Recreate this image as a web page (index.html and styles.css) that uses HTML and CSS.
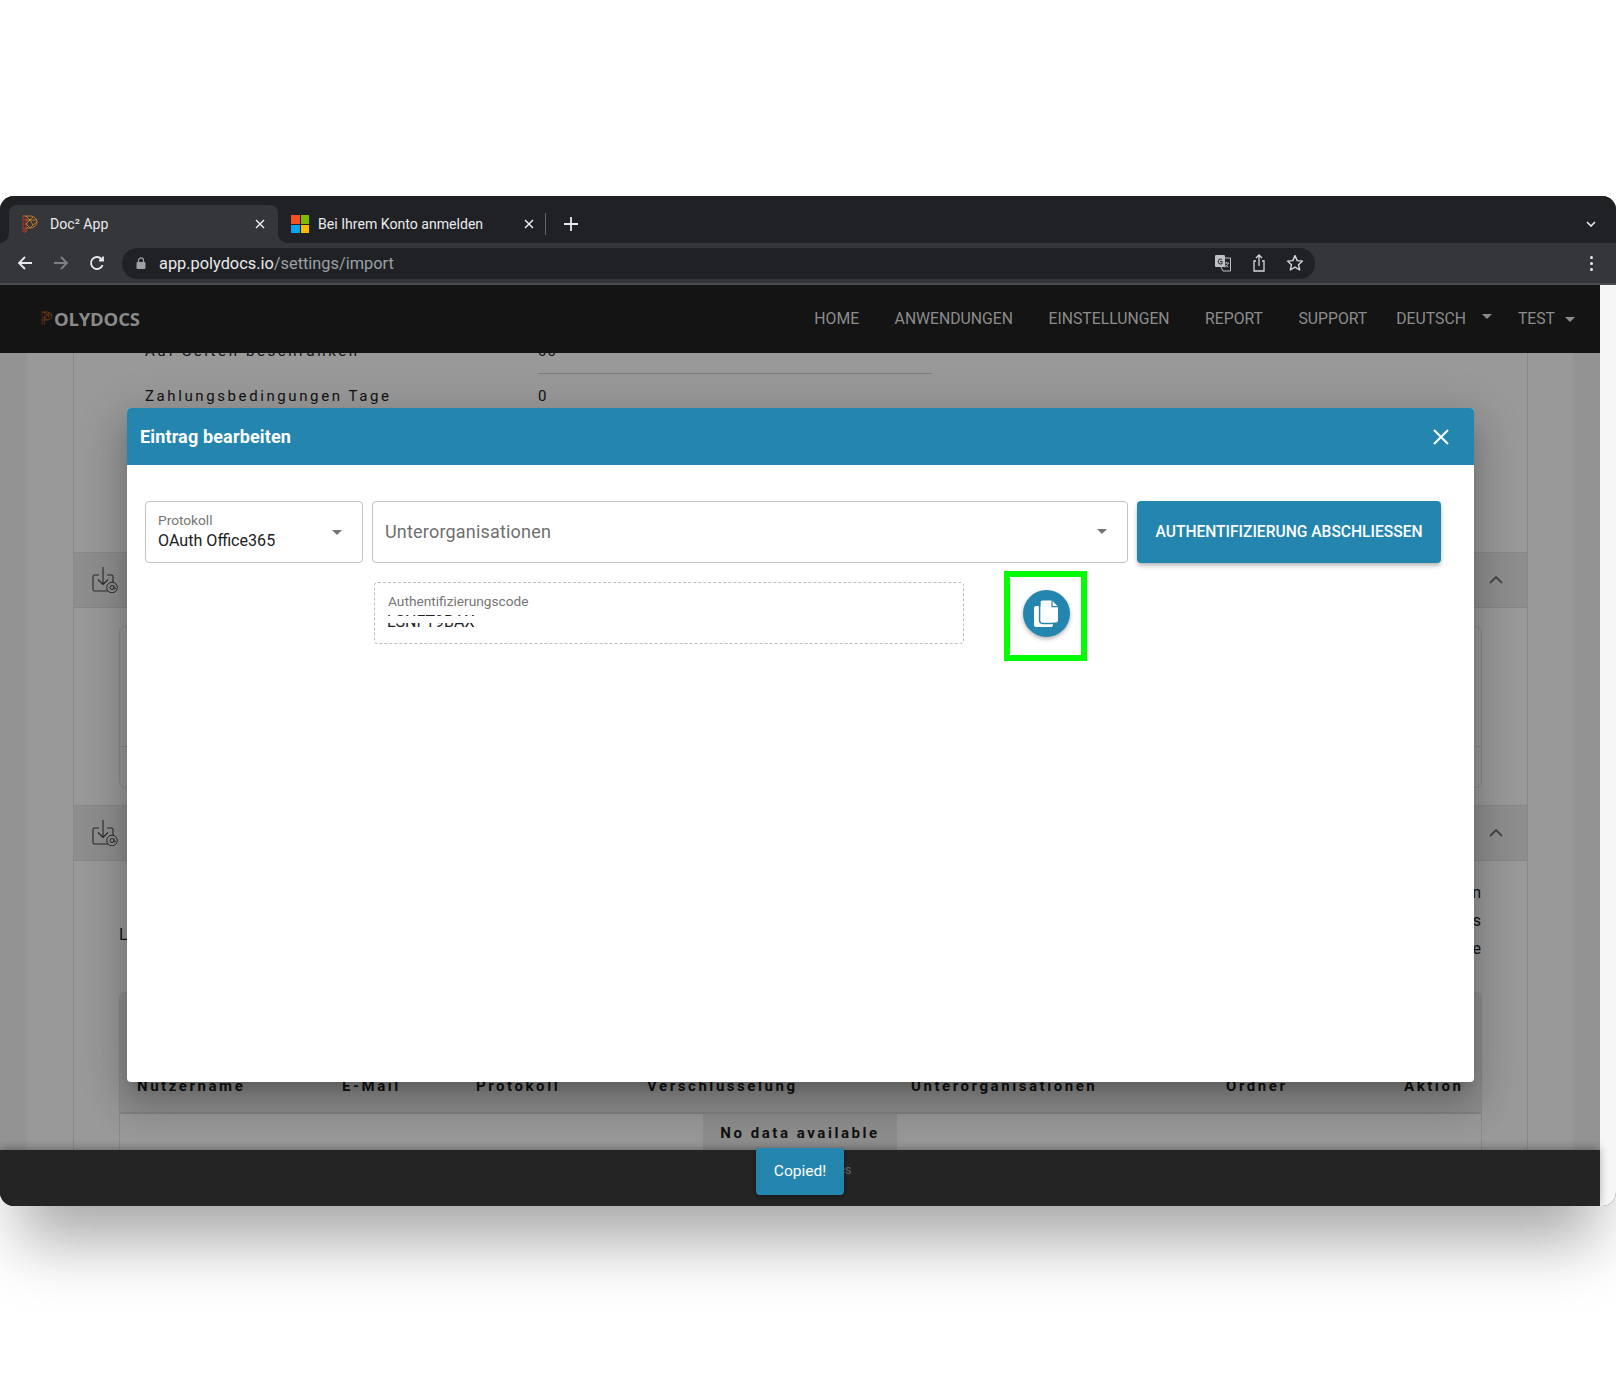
FILE: index.html
```html
<!DOCTYPE html>
<html lang="de">
<head>
<meta charset="utf-8">
<title>Doc² App</title>
<link rel="stylesheet" href="styles.css">
</head>
<body>
<div class="window">
  <div class="tabstrip">
    <div class="tab tab-active">
      <svg class="favicon" viewBox="0 0 16 18"><g fill="none" stroke-width=".8"><path stroke="#b8392a" d="M1 1v16h3v-4M1 13h3M1 9h5M1 5h3M4 1v16M1 13l3 4"/><path stroke="#e08a22" d="M1 1h7c4 0 7 3 7 6s-3 6-7 6H4M4 1l4 4 3-3M8 5l-4 4 4 4M8 5l3 5 4-3M8 5h7M8 13l3-3M4 5l4 0"/></g></svg>
      <span class="tab-title">Doc² App</span>
      <svg class="tab-close" viewBox="0 0 10 10"><path d="M1 1l8 8M9 1l-8 8"/></svg>
    </div>
    <div class="tab">
      <div class="ms-logo"><i class="ms-r"></i><i class="ms-g"></i><i class="ms-b"></i><i class="ms-y"></i></div>
      <span class="tab-title">Bei Ihrem Konto anmelden</span>
      <svg class="tab-close" viewBox="0 0 10 10"><path d="M1 1l8 8M9 1l-8 8"/></svg>
    </div>
    <div class="tab-sep"></div>
    <svg class="new-tab" viewBox="0 0 14 14"><path d="M7 0v14M0 7h14"/></svg>
    <svg class="tab-menu" viewBox="0 0 10 6"><path d="M1 1l4 4 4-4"/></svg>
  </div>

  <div class="toolbar">
    <svg class="tool-icon" viewBox="0 0 16 16"><path d="M15 8H2M8 2L2 8l6 6"/></svg>
    <svg class="tool-icon tool-dim" viewBox="0 0 16 16"><path d="M1 8h13M8 2l6 6-6 6"/></svg>
    <svg class="tool-icon" viewBox="0 0 16 16"><path d="M13.6 10.2A6 6 0 1 1 12.4 3.9L14 5.5M14 1.500v4h-4"/></svg>
    <div class="omnibox">
      <svg class="lock" viewBox="0 0 10 12"><path d="M2.500 5V3.400a2.500 2.500 0 0 1 5 0V5" fill="none" stroke="#9aa0a6" stroke-width="1.200"/><rect x=".5" y="5" width="9" height="7" rx="1" fill="#9aa0a6"/></svg>
      <span class="url"><b>app.polydocs.io</b>/settings/import</span>
      <svg class="omni-icon omni-translate" viewBox="0 0 18 18"><rect x="1" y="1" width="10" height="12" rx="1" fill="#bdc1c6"/><path d="M7 4h9.500v13H9L7 13" fill="none" stroke="#bdc1c6"/><path d="M8 5.500A2.400 2.400 0 1 0 8 9.500V7.500H6" fill="none" stroke="#35363a" stroke-width="1.100"/><path d="M10 9h5M12.500 8v1M14.300 9c-.5 2-2 3.400-3.800 4.200M11 10.500c.8 1.200 2 2 3.300 2.600" fill="none" stroke="#bdc1c6" stroke-width=".9"/></svg>
      <svg class="omni-icon" viewBox="0 0 18 18"><path d="M6 7H4v10h10V7h-2M9 12V1M6 4l3-3 3 3" fill="none" stroke="#d5d7da" stroke-width="1.300"/></svg>
      <svg class="omni-icon" viewBox="0 0 18 18"><path d="M9 1.600l2.200 5 5.300.5-4 3.600 1.200 5.300L9 13.200 4.300 16l1.200-5.300-4-3.600 5.300-.5z" fill="none" stroke="#d5d7da" stroke-width="1.400" stroke-linejoin="round"/></svg>
    </div>
    <div class="kebab"><i></i><i></i><i></i></div>
  </div>

  <div class="viewport">
    <div class="app">
      <nav class="navbar">
        <div class="logo">
          <svg class="logo-mark" viewBox="0 0 12 14"><g fill="none" stroke-width=".9"><path stroke="#5a1f14" d="M1 0v14M3.500 0v14M1 10l2.500 4M1 7h4"/><path stroke="#6e3f13" d="M1 1h5c3 0 5 2 5 4s-2 4-5 4H1M3.500 1l3 3 2-3M6.500 4l-3 3 3 2M6.500 4H11M6.500 4l2 3"/></g></svg>
          <span>OLYDOCS</span>
        </div>
        <ul class="nav-links">
          <li>HOME</li>
          <li>ANWENDUNGEN</li>
          <li>EINSTELLUNGEN</li>
          <li>REPORT</li>
          <li>SUPPORT</li>
          <li class="nav-lang">DEUTSCH<i class="caret caret-lang"></i></li>
          <li class="nav-user">TEST<i class="caret"></i></li>
        </ul>
      </nav>

      <main class="page">
        <div class="gutter">
          <div class="panel">
            <section class="settings">
              <div class="setting setting-clip"><span>Auf Seiten beschränken</span><span class="setting-value setting-underlined">00</span></div>
              <div class="setting"><span>Zahlungsbedingungen Tage</span><span class="setting-value">0</span></div>
            </section>

            <header class="acc-head">
              <svg class="acc-icon" viewBox="0 0 26 26"><use href="#inbox-at"/></svg>
              <svg class="acc-chevron" viewBox="0 0 14 9"><path d="M1 8l6-6 6 6"/></svg>
            </header>
            <section class="acc-body acc-body-first">
              <div class="card"><div class="card-foot"></div></div>
            </section>

            <header class="acc-head">
              <svg class="acc-icon" viewBox="0 0 26 26"><use href="#inbox-at"/></svg>
              <svg class="acc-chevron" viewBox="0 0 14 9"><path d="M1 8l6-6 6 6"/></svg>
            </header>
            <section class="acc-body">
              <div class="intro">
                <p class="intro-left">L</p>
                <div class="intro-right"><p>n</p><p>s</p><p>e</p></div>
              </div>
              <div class="table">
                <div class="table-head">
                  <span class="col-user">Nutzername</span>
                  <span class="col-mail">E-Mail</span>
                  <span class="col-proto">Protokoll</span>
                  <span class="col-enc">Verschlüsselung</span>
                  <span class="col-org">Unterorganisationen</span>
                  <span class="col-folder">Ordner</span>
                  <span class="col-action">Aktion</span>
                </div>
                <div class="table-body"><span class="no-data">No data available</span></div>
              </div>
            </section>
          </div>
        </div>
      </main>

      <footer class="footer"><span class="footer-text">© 2022 Polydocs</span></footer>

      <div class="modal">
        <div class="modal-head">
          <h2>Eintrag bearbeiten</h2>
          <svg class="modal-close" viewBox="0 0 16 16"><path d="M1 1l14 14M15 1L1 15"/></svg>
        </div>
        <div class="modal-body">
          <div class="form-row">
            <div class="field field-proto">
              <div class="field-text">
                <span class="field-label">Protokoll</span>
                <span class="field-value">OAuth Office365</span>
              </div>
              <i class="select-arrow"></i>
            </div>
            <div class="field field-org">
              <span class="field-placeholder">Unterorganisationen</span>
              <i class="select-arrow"></i>
            </div>
            <button class="finish-btn">AUTHENTIFIZIERUNG ABSCHLIESSEN</button>
          </div>
          <div class="code-row">
            <div class="code-field">
              <span class="field-label code-label">Authentifizierungscode</span>
              <span class="code-value">LSNFT9BAX</span>
            </div>
            <button class="copy-btn">
              <svg viewBox="0 0 47 47">
                <path d="M13 16h8v16h9v3a2 2 0 0 1-2 2H13a2 2 0 0 1-2-2V18a2 2 0 0 1 2-2z" fill="#fff"/>
                <path d="M19.500 10.600H29l6 6v14a2 2 0 0 1-2 2H19.500a2 2 0 0 1-2-2v-18a2 2 0 0 1 2-2z" fill="#fff"/>
                <path d="M16.600 12.600v18a3 3 0 0 0 3 3H30" fill="none" stroke="#2486ae" stroke-width="1.500"/>
                <path d="M29 10.600v6h6" fill="none" stroke="#2486ae" stroke-width="1.200"/>
              </svg>
            </button>
          </div>
        </div>
      </div>

      <div class="toast">Copied!</div>
    </div>
    <div class="scroll-track"></div>
  </div>
</div>

<svg class="sprite" aria-hidden="true">
  <symbol id="inbox-at" viewBox="0 0 26 26">
    <path d="M7 8H2.500a1.500 1.500 0 0 0-1.500 1.500v13A1.500 1.500 0 0 0 2.500 24H16M15 8h4.500A1.500 1.500 0 0 1 21 9.500V15" fill="none" stroke="#2a2a2a" stroke-width="1.100"/>
    <path d="M11 0v17M6 12.500l5 5 5-5" fill="none" stroke="#2a2a2a" stroke-width="1.100"/>
    <circle cx="20" cy="20.500" r="5.300" fill="none" stroke="#2a2a2a" stroke-width="1"/>
    <circle cx="20" cy="20.500" r="2" fill="none" stroke="#2a2a2a" stroke-width="1"/>
    <path d="M22 18.500v3c0 1 1.500 1 1.500-.5" fill="none" stroke="#2a2a2a" stroke-width=".9"/>
  </symbol>
</svg>
</body>
</html>
```
FILE: styles.css
```css
* { box-sizing: border-box; }
html, body { margin: 0; padding: 0; background: #fff; }
body { height: 1400px; padding-top: 196px; font-family: Roboto, "Liberation Sans", sans-serif; overflow: hidden; }
p, h2, ul { margin: 0; padding: 0; }
.sprite { display: none; }

.window {
  width: 1616px; height: 1010px; display: flex; flex-direction: column;
  border-radius: 14px; overflow: hidden; background: #202124;
  box-shadow: 0 55px 60px -20px rgba(0,0,0,.34);
}

/* tabs */
.tabstrip { height: 47px; flex: none; display: flex; align-items: flex-end; padding-left: 9px; position: relative; background: #202124; }
.tab { width: 269px; height: 38px; display: flex; align-items: center; padding: 0 0 0 13px; position: relative; color: #e8eaed; border-radius: 8px 8px 0 0; }
.tab-active { background: #35363a; }
.tab-active::before, .tab-active::after { content: ""; position: absolute; bottom: 0; width: 9px; height: 9px; }
.tab-active::before { left: -9px; background: radial-gradient(circle at 0 0, #202124 8.500px, #35363a 9px); }
.tab-active::after { right: -9px; background: radial-gradient(circle at 100% 0, #202124 8.500px, #35363a 9px); }
.favicon { width: 16px; height: 18px; flex: none; }
.tab-title { font-size: 14.100px; margin-left: 11px; flex: 1; white-space: nowrap; }
.tab-active .tab-title { margin-left: 12px; }
.tab + .tab .tab-title { margin-left: 9px; }
.tab-close { width: 10px; height: 10px; flex: none; margin-right: 13px; fill: none; stroke: #e8eaed; stroke-width: 1.500; }
.ms-logo { width: 18px; height: 18px; display: grid; grid-template-columns: 1fr 1fr; gap: 1px; flex: none; }
.ms-logo i { display: block; }
.ms-r { background: #f25022; } .ms-g { background: #7fba00; } .ms-b { background: #00a4ef; } .ms-y { background: #ffb900; }
.tab-sep { width: 1px; height: 22px; background: #5f6368; margin: 0 0 8px -2px; }
.new-tab { width: 14px; height: 14px; margin: 0 0 12px 18px; fill: none; stroke: #e8eaed; stroke-width: 1.800; }
.tab-menu { width: 10px; height: 6px; margin: 0 20px 16px auto; fill: none; stroke: #e8eaed; stroke-width: 1.600; }

/* toolbar */
.toolbar { height: 42px; flex: none; display: flex; align-items: center; padding: 0 0 0 17px; gap: 20px; background: #35363a; border-bottom: 2px solid #4a4b4e; }
.tool-icon { width: 16px; height: 16px; flex: none; fill: none; stroke: #e8eaed; stroke-width: 1.800; }
.tool-dim { stroke: #7d7f83; }
.omnibox { width: 1193px; height: 31px; margin-left: -3px; border-radius: 16px; background: #202124; display: flex; align-items: center; padding: 0 11px 0 14px; }
.lock { width: 10px; height: 12px; flex: none; }
.url { font-size: 16.350px; margin-left: 13px; color: #9aa0a6; flex: 1; white-space: nowrap; }
.url b { font-weight: 400; color: #e8eaed; }
.omni-icon { width: 18px; height: 18px; flex: none; margin-left: 18px; }
.omni-translate { margin-left: 0; }
.kebab { margin-left: auto; margin-right: 23px; display: flex; flex-direction: column; gap: 3px; }
.kebab i { display: block; width: 3px; height: 3px; border-radius: 50%; background: #e8eaed; }

/* app */
.viewport { flex: 1; display: flex; min-height: 0; }
.app { width: 1600px; flex: none; display: flex; flex-direction: column; position: relative; }
.scroll-track { flex: 1; background: #f6f6f6; }

.navbar { height: 68px; flex: none; background: #141414; display: flex; align-items: center; padding: 0 0 2px 41px; }
.logo { display: flex; align-items: center; color: #8a8a8a; font: 700 18.500px "Open Sans", sans-serif; letter-spacing: -.2px; }
.logo-mark { width: 12px; height: 14px; margin-right: 1px; }
.nav-links { list-style: none; margin-left: auto; display: flex; align-items: center; padding-right: 25px; color: #8c8c8c; font-size: 15.750px; }
.nav-links li { margin-left: 35.500px; position: relative; white-space: nowrap; }
.nav-links .nav-lang { margin-left: 29px; padding-right: 26px; }
.nav-links .nav-user { margin-left: 26px; padding-right: 20px; }
.caret { position: absolute; right: 0; top: 8px; width: 0; height: 0; border: 5px solid transparent; border-top-color: #8c8c8c; border-bottom: 0; }
.caret-lang { right: 0; top: 5px; }

.page { flex: 1; min-height: 0; background: #939393; padding: 0 27px; overflow: hidden; color: #111; }
.gutter { background: #999; height: 100%; padding: 0 45px 0 46px; }
.panel { height: 100%; border-left: 1px solid #888; border-right: 1px solid #888; }

.settings { display: flow-root; height: 199px; padding-left: 71px; font-size: 15px; letter-spacing: 2.600px; }
.setting { display: grid; grid-template-columns: 393px 394px; height: 24px; line-height: 24px; }
.setting-clip { margin-top: -14px; margin-bottom: 21px; }
.setting-value { letter-spacing: 1px; }
.setting-underlined { border-bottom: 1px solid #7c7c7c; height: 35px; }

.acc-head { height: 56px; background: #8e8e8e; border-top: 1px solid #888; border-bottom: 1px solid #858585; display: flex; align-items: center; justify-content: space-between; padding: 0 24px 0 18px; }
.acc-icon { width: 26px; height: 26px; }
.acc-chevron { width: 14px; height: 9px; margin-top: -2px; fill: none; stroke: #454545; stroke-width: 1.800; }
.acc-body { padding: 0 45px; }
.acc-body-first { height: 197px; padding-top: 18px; }
.card { height: 162px; border: 1px solid #8a8a8a; border-radius: 6px; position: relative; display: flex; flex-direction: column; justify-content: flex-end; }
.card-foot { height: 41px; border-top: 1px solid #8a8a8a; }

.intro { height: 131px; display: flex; justify-content: space-between; font-size: 16px; padding-top: 18px; }
.intro-left { margin-top: 46px; }
.intro-right { text-align: right; padding-right: 1px; line-height: 28px; }
.table { border: 1px solid #8a8a8a; border-radius: 6px 6px 0 0; font-weight: 700; font-size: 15px; letter-spacing: 2.560px; color: #111; }
.table-head { height: 121px; background: #8e8e8e; border-bottom: 2px solid #838383; display: grid; grid-template-columns: 205px 134px 171px 264px 315px 178px 1fr; padding: 84px 0 0 17px; line-height: 18px; }
.table-body { height: 60px; display: flex; justify-content: center; }
.no-data { display: block; width: 194px; margin-left: -1px; background: #8e8e8e; text-align: center; padding-top: 9px; line-height: 20px; }

.footer { height: 56px; flex: none; background: #242424; display: flex; justify-content: center; padding-top: 12px; box-shadow: 0 -2px 8px rgba(0,0,0,.3); position: relative; }
.footer-text { color: #666; font-size: 12.500px; height: 18px; margin-left: 8px; }

/* modal */
.modal {
  position: absolute; left: 127px; top: 123px; width: 1347px; height: 674px;
  background: #fff; border-radius: 4px;
  box-shadow: 0 11px 15px -7px rgba(0,0,0,.2), 0 24px 38px 3px rgba(0,0,0,.14), 0 9px 46px 8px rgba(0,0,0,.12);
  display: flex; flex-direction: column;
}
.modal-head { height: 57px; flex: none; background: #2486ae; border-radius: 4px 4px 0 0; display: flex; align-items: center; justify-content: space-between; padding: 0 25px 0 13px; color: #fff; }
.modal-head h2 { font-size: 18px; font-weight: 700; letter-spacing: .15px; }
.modal-close { width: 16px; height: 16px; fill: none; stroke: #fff; stroke-width: 2; }
.modal-body { padding: 36px 18px 0; }
.form-row { display: flex; gap: 9px; height: 62px; }
.field { border: 1px solid #c4c4c4; border-radius: 4px; display: flex; align-items: center; justify-content: space-between; background: #fff; }
.field-proto { width: 218px; padding: 0 20px 0 12px; }
.field-org { width: 756px; padding: 0 20px 2px 12px; }
.field-text { display: flex; flex-direction: column; }
.field-label { display: block; font-size: 13.700px; color: #757575; line-height: 18px; }
.field-proto .field-label { margin-top: -1px; }
.field-value { font-size: 16.100px; color: #212121; line-height: 23px; }
.field-placeholder { font-size: 18px; color: #6f6f6f; letter-spacing: .19px; }
.select-arrow { width: 0; height: 0; border: 5.500px solid transparent; border-top: 5.500px solid #757575; border-bottom: 0; flex: none; }
.finish-btn { width: 304px; border: 0; border-radius: 4px; background: #2486ae; color: #fff; font: 500 15.600px Roboto, sans-serif; box-shadow: 0 2px 4px -1px rgba(0,0,0,.25), 0 4px 5px rgba(0,0,0,.12); padding: 0; }

.code-row { display: flex; align-items: center; margin: 19px 0 0 229px; }
.code-field { width: 590px; height: 62px; border: 1px dashed #bdbdbd; border-radius: 4px; padding: 9px 12px 0; }
.code-label { margin-left: 1px; }
.code-value { display: block; position: relative; font-size: 16px; color: #222; line-height: 23px; width: 90px; }
.code-value::before { content: ""; position: absolute; left: -2px; right: 0; top: 6px; height: 7px; background: #fff; }
.copy-btn { width: 47px; height: 47px; margin-left: 59px; padding: 0; border: 0; border-radius: 50%; background: #2486ae; position: relative; box-shadow: 0 2px 4px rgba(0,0,0,.3); }
.copy-btn svg { display: block; width: 47px; height: 47px; }
.copy-btn::after { content: ""; position: absolute; left: -19px; top: -19px; width: 83px; height: 90px; border: 6px solid #00ff00; box-sizing: border-box; }

.toast { position: absolute; left: 756px; top: 863px; width: 88px; height: 47px; padding-bottom: 2px; border-radius: 4px; background: #2486ae; color: #fff; font-size: 15.500px; display: flex; align-items: center; justify-content: center; box-shadow: 0 2px 4px rgba(0,0,0,.3); }
```
